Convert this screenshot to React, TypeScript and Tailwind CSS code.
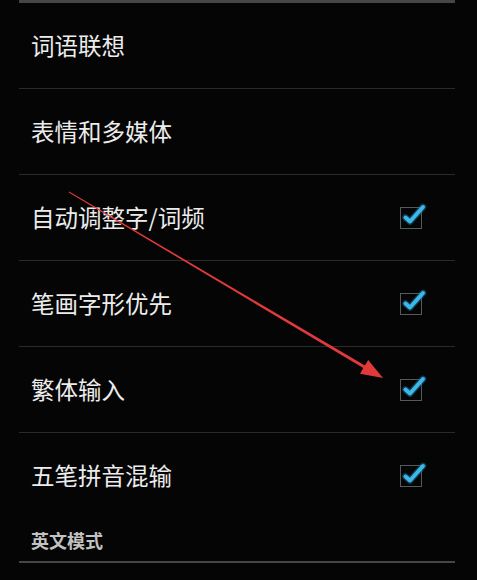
import React from "react";

const rows: { label: string; checked?: boolean; divider: boolean }[] = [
  { label: "词语联想", divider: true },
  { label: "表情和多媒体", divider: true },
  { label: "自动调整字/词频", checked: true, divider: true },
  { label: "笔画字形优先", checked: true, divider: true },
  { label: "繁体输入", checked: true, divider: true },
  { label: "五笔拼音混输", checked: true, divider: false },
];

function Check() {
  return (
    <div className="relative w-[22px] h-[22px] border-[1.5px] border-[#555a5e]">
      <svg
        className="absolute left-[-1.5px] top-[-1.5px] overflow-visible"
        width="22"
        height="22"
        viewBox="0 0 22 22"
      >
        <path
          d="M5.5 11.5 L10 15.5 L23 1"
          fill="none"
          stroke="#1f6f95"
          strokeWidth="6.5"
          strokeLinecap="round"
          strokeLinejoin="round"
          opacity="0.5"
        />
        <path
          d="M5.5 11.5 L10 15.5 L23 1"
          fill="none"
          stroke="#3ab8ea"
          strokeWidth="4"
          strokeLinecap="round"
          strokeLinejoin="round"
        />
      </svg>
    </div>
  );
}

export default function App() {
  return (
    <div
      className="relative w-[477px] h-[580px] bg-[#050505] overflow-hidden"
      style={{ fontFamily: '"Noto Sans CJK SC", "Noto Sans", sans-serif' }}
    >
      <div className="ml-[19px] mr-[22px] flex flex-col">
        <div className="h-[3px] bg-[#464646]" />
        {rows.map((r, i) => (
          <div
            key={i}
            className={`h-[86px] flex items-center justify-between pl-[12px] pr-[33px] ${
              r.divider ? "border-b border-[#2a2a2a]" : ""
            }`}
          >
            <span className="text-[23.5px] leading-none text-[#ececec]">{r.label}</span>
            {r.checked && <Check />}
          </div>
        ))}
        <div className="h-[42px] flex items-center pl-[12px]">
          <span className="text-[18px] font-bold leading-none text-[#c2c2c2]">英文模式</span>
        </div>
        <div className="h-[2px] bg-[#464646]" />
      </div>
      <svg className="absolute left-0 top-0 pointer-events-none" width="477" height="580">
        <polygon
          points="69.2,191.6 364.9,365.5 368.2,359.9 383,378 360,373.7 363.3,368.1 68.8,192.4"
          fill="#e23a3a"
        />
      </svg>
    </div>
  );
}
